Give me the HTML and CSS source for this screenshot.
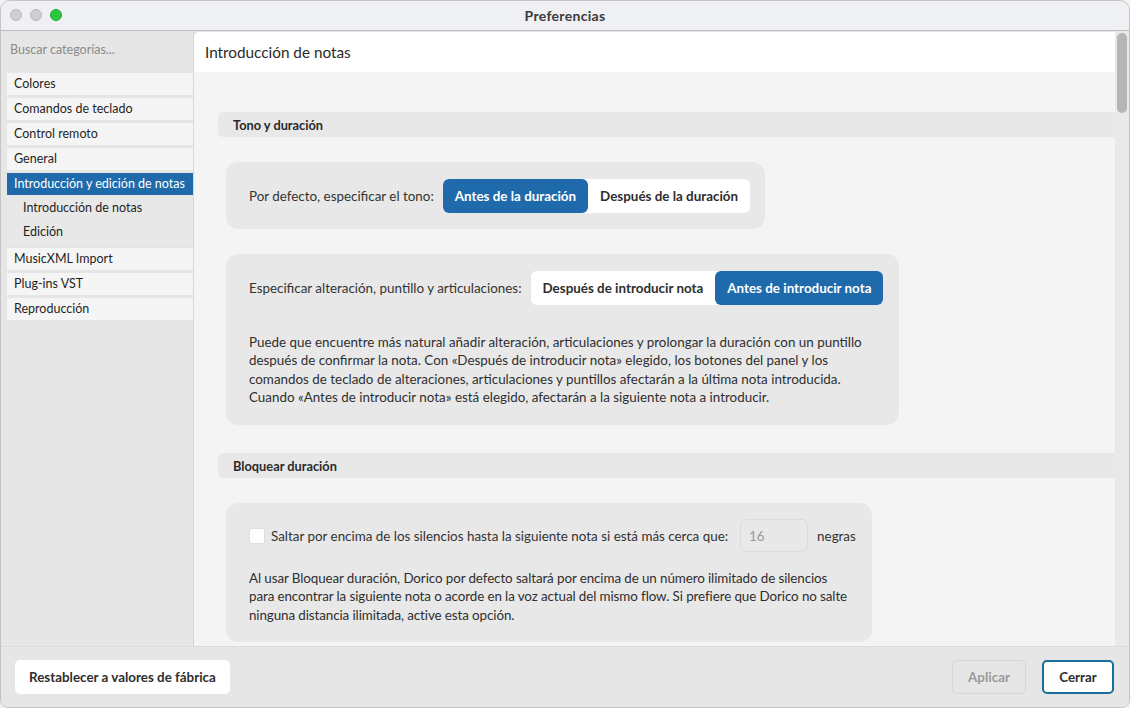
FILE: index.html
```html
<!DOCTYPE html>
<html lang="es">
<head>
<meta charset="utf-8">
<title>Preferencias</title>
<link rel="stylesheet" href="styles.css">
</head>
<body>
<div class="window">
  <header class="titlebar">
    <div class="lights">
      <span class="light"></span>
      <span class="light"></span>
      <span class="light green"></span>
    </div>
    <div class="title">Preferencias</div>
  </header>
  <div class="body">
    <aside class="sidebar">
      <div class="search">Buscar categorías...</div>
      <ul class="cats">
        <li class="cat">Colores</li>
        <li class="cat">Comandos de teclado</li>
        <li class="cat">Control remoto</li>
        <li class="cat">General</li>
        <li class="group">
          <div class="cat selected">Introducción y edición de notas</div>
          <div class="sub">Introducción de notas</div>
          <div class="sub">Edición</div>
        </li>
        <li class="cat">MusicXML Import</li>
        <li class="cat">Plug-ins VST</li>
        <li class="cat">Reproducción</li>
      </ul>
    </aside>
    <main class="pane">
      <div class="pane-head">Introducción de notas</div>
      <div class="content">
        <h2 class="section">Tono y duración</h2>
        <div class="card">
          <div class="row">
            <span class="label">Por defecto, especificar el tono:</span>
            <div class="seg">
              <span class="seg-btn on">Antes de la duración</span>
              <span class="seg-btn">Después de la duración</span>
            </div>
          </div>
        </div>
        <div class="card">
          <div class="row">
            <span class="label">Especificar alteración, puntillo y articulaciones:</span>
            <div class="seg">
              <span class="seg-btn">Después de introducir nota</span>
              <span class="seg-btn on">Antes de introducir nota</span>
            </div>
          </div>
          <p class="desc">Puede que encuentre más natural añadir alteración, articulaciones y prolongar la duración con un puntillo<br>después de confirmar la nota. Con «Después de introducir nota» elegido, los botones del panel y los<br>comandos de teclado de alteraciones, articulaciones y puntillos afectarán a la última nota introducida.<br>Cuando «Antes de introducir nota» está elegido, afectarán a la siguiente nota a introducir.</p>
        </div>
        <h2 class="section">Bloquear duración</h2>
        <div class="card lock">
          <div class="row">
            <span class="check"></span>
            <span class="label">Saltar por encima de los silencios hasta la siguiente nota si está más cerca que:</span>
            <span class="num">16</span>
            <span class="label unit">negras</span>
          </div>
          <p class="desc">Al usar Bloquear duración, Dorico por defecto saltará por encima de un número ilimitado de silencios<br>para encontrar la siguiente nota o acorde en la voz actual del mismo flow. Si prefiere que Dorico no salte<br>ninguna distancia ilimitada, active esta opción.</p>
        </div>
      </div>
    </main>
    <div class="scrollbar"><div class="thumb"></div></div>
  </div>
  <footer class="footer">
    <button class="btn">Restablecer a valores de fábrica</button>
    <div class="spacer"></div>
    <button class="btn disabled">Aplicar</button>
    <button class="btn primary">Cerrar</button>
  </footer>
</div>
</body>
</html>
```

FILE: styles.css
```css
* { box-sizing: border-box; }
html, body { margin: 0; padding: 0; }
body {
  width: 1130px;
  height: 708px;
  overflow: hidden;
  background: #f2f2f2;
  font-family: "Lato", "Noto Sans", sans-serif;
  font-size: 13px;
  color: #2b2b2b;
}
.window {
  width: 1130px;
  height: 708px;
  display: flex;
  flex-direction: column;
  background: #e6e6e6;
  border: 1px solid #c4c4c4;
  border-radius: 10px 10px 8px 8px;
  overflow: hidden;
}
.titlebar {
  height: 30px;
  flex: none;
  display: flex;
  align-items: center;
  justify-content: center;
  background: #eef0f3;
  border-bottom: 1px solid #bdbdbd;
  position: relative;
}
.lights {
  position: absolute;
  left: 9px;
  top: 8px;
  display: flex;
  gap: 8px;
}
.light {
  width: 12px;
  height: 12px;
  border-radius: 50%;
  background: #cfcfd1;
  border: 1px solid #b9b9bc;
}
.light.green { background: #2ac840; border-color: #22a834; }
.title {
  font-weight: 700;
  font-size: 14px;
  color: #3a3a3a;
  letter-spacing: 0.3px;
  margin-top: -1px;
}
.body {
  flex: 1;
  display: flex;
  min-height: 0;
}
.sidebar {
  width: 193px;
  flex: none;
  background: #e6e6e6;
  padding: 0 0 0 6px;
  border-right: 1px solid #d6d6d6;
}
.search {
  height: 42px;
  padding: 11px 0 0 3px;
  color: #8a8a8a;
  font-size: 12.5px;
}
.cats {
  list-style: none;
  margin: 0;
  padding: 0;
  display: flex;
  flex-direction: column;
  gap: 3px;
}
.cat {
  height: 22px;
  background: #f5f5f5;
  padding: 3px 0 0 7px;
  font-size: 12.5px;
  color: #1f1f1f;
}
.cat.selected {
  background: #1f6aab;
  color: #fff;
}
.group {
  background: #e8e8e8;
  padding-bottom: 2px;
}
.sub {
  height: 24px;
  padding: 5px 0 0 16px;
  font-size: 12.5px;
  color: #1f1f1f;
}
.pane {
  flex: 1;
  background: #f4f4f4;
  border-top-left-radius: 6px;
  overflow: hidden;
  margin-top: 1px;
}
.pane-head {
  height: 40px;
  background: #fff;
  padding: 11px 0 0 11px;
  font-size: 15.3px;
  color: #2a2a2a;
}
.content {
  padding: 40px 0 0 24px;
  display: flex;
  flex-direction: column;
  align-items: flex-start;
  font-size: 13.4px;
}
.section {
  align-self: stretch;
  margin: 0;
  height: 25px;
  background: #e8e8e8;
  border-radius: 5px 0 0 5px;
  font-size: 12.8px;
  font-weight: 700;
  padding: 5px 0 0 15px;
  color: #2a2a2a;
}
.card {
  margin: 25px 0 0 8px;
  background: #e8e8e8;
  border-radius: 12px;
  padding: 17px 15px 16px 23px;
  display: flex;
  flex-direction: column;
}
.card:has(.desc) { padding-bottom: 19px; padding-right: 16px; }
.card + .section { margin-top: 28px; }
.row {
  display: flex;
  align-items: center;
  height: 34px;
}
.label { color: #333; }
.seg {
  display: flex;
  margin-left: 9px;
  height: 34px;
  background: #fff;
  border-radius: 6px;
}
.seg-btn {
  display: flex;
  align-items: center;
  padding: 0 12px;
  font-weight: 700;
  color: #2e2e2e;
  border-radius: 6px;
}
.seg-btn.on {
  background: #1f6aab;
  color: #fff;
}
.desc {
  margin: 28px 0 0;
  width: 0;
  min-width: 100%;
  line-height: 18.3px;
  white-space: nowrap;
  color: #2f2f2f;
}
.card.lock { padding-top: 16px; padding-bottom: 18px; }
.card.lock .row { height: 33px; }
.card.lock .desc { margin-top: 17px; letter-spacing: -0.1px; }
.check {
  width: 16px;
  height: 16px;
  background: #fff;
  border: 1px solid #dedede;
  border-radius: 3px;
  margin-right: 6px;
}
.num {
  margin-left: 12px;
  width: 68px;
  height: 33px;
  border: 1px solid #dcdcdc;
  border-radius: 6px;
  padding: 8px 0 0 8px;
  color: #9a9a9a;
}
.unit { margin-left: 9px; }
.scrollbar {
  width: 14px;
  flex: none;
  background: #e9e9e9;
  padding: 2px 2px 0 2px;
}
.thumb {
  height: 80px;
  background: #b5b5b5;
  border-radius: 5px;
}
.footer {
  height: 61px;
  flex: none;
  display: flex;
  align-items: center;
  padding: 0 15px 0 14px;
  gap: 16px;
  background: #e6e6e6;
  border-top: 1px solid #dcdcdc;
}
.spacer { flex: 1; }
.btn {
  height: 34px;
  padding: 0 12px;
  border: 2px solid #fff;
  background: #fff;
  border-radius: 5px;
  font-family: inherit;
  font-size: 13.4px;
  font-weight: 700;
  color: #2e2e2e;
}
.btn.disabled {
  background: #e6e6e6;
  border: 1px solid #d6d6d6;
  color: #9a9a9a;
  width: 74px;
}
.btn.primary {
  border: 2px solid #1a6f9a;
  width: 72px;
}
```
